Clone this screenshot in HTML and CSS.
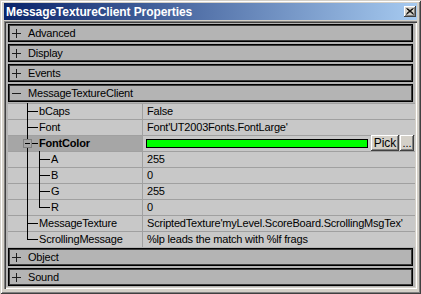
FILE: index.html
```html
<!DOCTYPE html>
<html>
<head>
<meta charset="utf-8">
<link rel="stylesheet" href="styles.css">
</head>
<body>
<div class="window">
  <div class="titlebar">
    <span class="title">MessageTextureClient Properties</span>
    <span class="close"><svg width="8" height="7" viewBox="0 0 8 7"><path d="M0.5 0.5 L7.5 6.5 M1.5 0.5 L7.5 5.7 M7.5 0.5 L0.5 6.5 M6.5 0.5 L0.5 5.7" stroke="#000" stroke-width="1" fill="none"/></svg></span>
  </div>
  <div class="client">
    <div class="panel">
      <div class="cat"><span class="sign plus"></span><span>Advanced</span></div>
      <div class="cat"><span class="sign plus"></span><span>Display</span></div>
      <div class="cat"><span class="sign plus"></span><span>Events</span></div>
      <div class="cat"><span class="sign minus"></span><span>MessageTextureClient</span></div>
      <div class="props">
        <div class="row"><div class="name"><span class="tee"></span><span class="label">bCaps</span></div><div class="value">False</div></div>
        <div class="row"><div class="name"><span class="tee"></span><span class="label">Font</span></div><div class="value">Font'UT2003Fonts.FontLarge'</div></div>
        <div class="row"><div class="name selected"><span class="tee expander"><span class="box"></span></span><span class="label bold">FontColor</span></div><div class="value colorvalue"><span class="swatch"></span><span class="btn pick">Pick</span><span class="btn dots">...</span></div></div>
        <div class="row"><div class="name"><span class="pipe"></span><span class="tee"></span><span class="label">A</span></div><div class="value">255</div></div>
        <div class="row"><div class="name"><span class="pipe"></span><span class="tee"></span><span class="label">B</span></div><div class="value">0</div></div>
        <div class="row"><div class="name"><span class="pipe"></span><span class="tee"></span><span class="label">G</span></div><div class="value">255</div></div>
        <div class="row"><div class="name"><span class="pipe"></span><span class="elbow"></span><span class="label">R</span></div><div class="value">0</div></div>
        <div class="row"><div class="name"><span class="tee"></span><span class="label">MessageTexture</span></div><div class="value">ScriptedTexture'myLevel.ScoreBoard.ScrollingMsgTex'</div></div>
        <div class="row"><div class="name"><span class="elbow"></span><span class="label">ScrollingMessage</span></div><div class="value">%lp leads the match with %lf frags</div></div>
      </div>
      <div class="cat"><span class="sign plus"></span><span>Object</span></div>
      <div class="cat"><span class="sign plus"></span><span>Sound</span></div>
    </div>
  </div>
</div>
</body>
</html>
```
FILE: styles.css
```css
html, body {
  margin: 0;
  padding: 0;
  background: #d4d0c8;
}

.window {
  width: 421px;
  height: 294px;
  box-sizing: border-box;
  padding: 3px 4px 5px 4px;
  background: #d4d0c8;
  box-shadow: inset 1px 1px 0 #d4d0c8, inset -1px -1px 0 #404040, inset 2px 2px 0 #ffffff, inset -2px -2px 0 #808080;
  display: flex;
  flex-direction: column;
  font-family: "Liberation Sans", Arial, sans-serif;
  font-size: 11px;
  letter-spacing: -0.2px;
  color: #000;
}

.titlebar {
  height: 17px;
  flex: none;
  display: flex;
  align-items: center;
  padding-left: 2px;
  background: linear-gradient(to right, #0a246a, #a6caf0);
  color: #fff;
  margin-bottom: 1px;
}

.title {
  font-weight: bold;
  font-size: 12px;
  letter-spacing: -0.1px;
  white-space: nowrap;
}

.close {
  margin-left: auto;
  margin-right: 1px;
  width: 12px;
  height: 11px;
  box-sizing: border-box;
  background: #d4d0c8;
  box-shadow: inset -1px -1px 0 #404040, inset 1px 1px 0 #ffffff, inset -2px -2px 0 #808080;
  display: flex;
  align-items: center;
  justify-content: center;
}

.close svg {
  display: block;
}

.client {
  flex: 1;
  box-sizing: border-box;
  padding: 2px;
  box-shadow: inset 1px 1px 0 #808080, inset 2px 2px 0 #404040, inset -1px -1px 0 #ffffff, inset -2px -2px 0 #d4d0c8;
  display: flex;
}

.panel {
  flex: 1;
  background: #b4b4b4;
  display: flex;
  flex-direction: column;
}

.cat {
  height: 18px;
  margin: 1px 2px;
  box-sizing: border-box;
  border: 1px solid #000;
  box-shadow: inset 0 0 0 1px #3c3c3c;
  background: #b4b4b4;
  display: flex;
  align-items: center;
  padding-left: 3px;
  white-space: nowrap;
}

.sign {
  width: 9px;
  height: 9px;
  flex: none;
  margin-right: 7px;
}

.sign.plus {
  background:
    linear-gradient(#1e1e1e, #1e1e1e) 0 4px / 9px 1px no-repeat,
    linear-gradient(#1e1e1e, #1e1e1e) 4px 0 / 1px 9px no-repeat;
}

.sign.minus {
  background: linear-gradient(#1e1e1e, #1e1e1e) 0 4px / 9px 1px no-repeat;
}

.props {
  display: flex;
  flex-direction: column;
  margin-left: 2px;
}

.row {
  height: 16px;
  display: grid;
  grid-template-columns: 134px 1fr;
  background: linear-gradient(#a0a0a0, #a0a0a0) 0 0 / 100% 1px no-repeat, #c8c8c8;
}

.name {
  display: flex;
  align-items: stretch;
  padding-left: 19px;
  white-space: nowrap;
}

.name.selected {
  background: linear-gradient(#a0a0a0, #a0a0a0) 0 0 / 100% 1px no-repeat, #a6a6a6;
}

.label {
  align-self: center;
  margin-left: 1px;
}

.bold {
  font-weight: bold;
}

.pipe {
  width: 12px;
  flex: none;
  background: linear-gradient(#000, #000) 0 0 / 1px 100% no-repeat;
}

.tee {
  width: 11px;
  flex: none;
  background:
    linear-gradient(#000, #000) 0 0 / 1px 100% no-repeat,
    linear-gradient(#000, #000) 0 8px / 100% 1px no-repeat;
}

.elbow {
  width: 11px;
  flex: none;
  background:
    linear-gradient(#000, #000) 0 0 / 1px 9px no-repeat,
    linear-gradient(#000, #000) 0 8px / 100% 1px no-repeat;
}

.expander {
  position: relative;
}

.box {
  position: absolute;
  left: -4px;
  top: 4px;
  width: 9px;
  height: 9px;
  box-sizing: border-box;
  border: 1px solid #808080;
  background: linear-gradient(#000, #000) 1px 3px / 5px 1px no-repeat, #a6a6a6;
}

.value {
  border-left: 1px solid #a0a0a0;
  padding-left: 4px;
  display: flex;
  align-items: center;
  white-space: nowrap;
  overflow: hidden;
}

.value.colorvalue {
  padding-left: 3px;
  align-items: flex-start;
}

.swatch {
  width: 222px;
  height: 9px;
  margin-top: 4px;
  box-sizing: border-box;
  border: 1px solid #000;
  background: #00ff00;
  flex: none;
}

.btn {
  height: 16px;
  box-sizing: border-box;
  background: #d4d0c8;
  box-shadow: inset -1px -1px 0 #404040, inset 1px 1px 0 #ffffff, inset -2px -2px 0 #808080;
  display: flex;
  align-items: center;
  justify-content: center;
  flex: none;
  letter-spacing: 0;
}

.btn.pick {
  width: 28px;
  margin-left: 3px;
  font-size: 12px;
}

.btn.dots {
  width: 14px;
  margin-left: 1px;
}
```
